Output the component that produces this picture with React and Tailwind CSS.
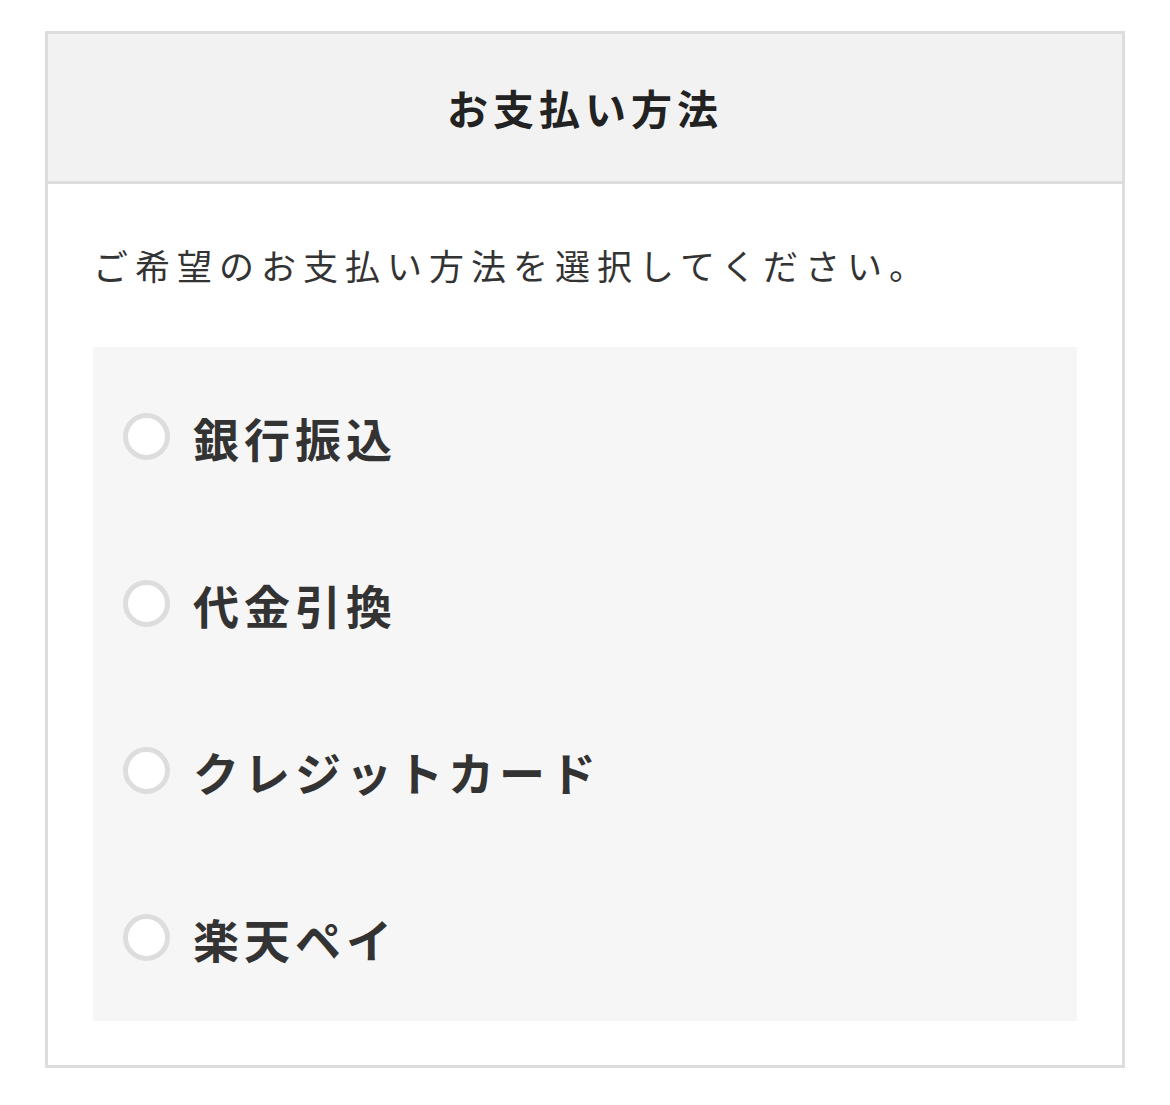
import React from 'react';

const METHODS = ['銀行振込', '代金引換', 'クレジットカード', '楽天ペイ'];

const RadioRow = ({ label }) => (
  <label className="flex items-center h-[167px] pl-[30px] cursor-pointer">
    <span className="w-[47px] h-[47px] rounded-full border-[5px] border-[#dddddd] bg-white flex-shrink-0" />
    <span className="ml-[23px] text-[46px] font-bold tracking-[5px] text-[#333333] leading-none">{label}</span>
  </label>
);

export default function App() {
  return (
    <div className="bg-white min-h-[1105px] pt-[31px] px-[45px]" style={{ fontFamily: '"Noto Sans CJK JP", "Noto Sans", sans-serif' }}>
      <div className="border-[3px] border-[#dddddd] w-[1080px]">
        {/* Header */}
        <div className="h-[150px] flex items-center justify-center bg-[#f2f2f2] border-b-[3px] border-[#dddddd]">
          <h2 className="text-[41px] font-bold tracking-[5px] text-[#222222] leading-none">お支払い方法</h2>
        </div>

        {/* Body */}
        <div className="px-[45px] pb-[44px]">
          <p className="pt-[55px] pb-[57px] text-[35px] leading-[51px] tracking-[7px] text-[#333333]">
            ご希望のお支払い方法を選択してください。
          </p>
          <div className="bg-[#f6f6f6] pt-[6px]">
            {METHODS.map((m) => (
              <RadioRow key={m} label={m} />
            ))}
          </div>
        </div>
      </div>
    </div>
  );
}
